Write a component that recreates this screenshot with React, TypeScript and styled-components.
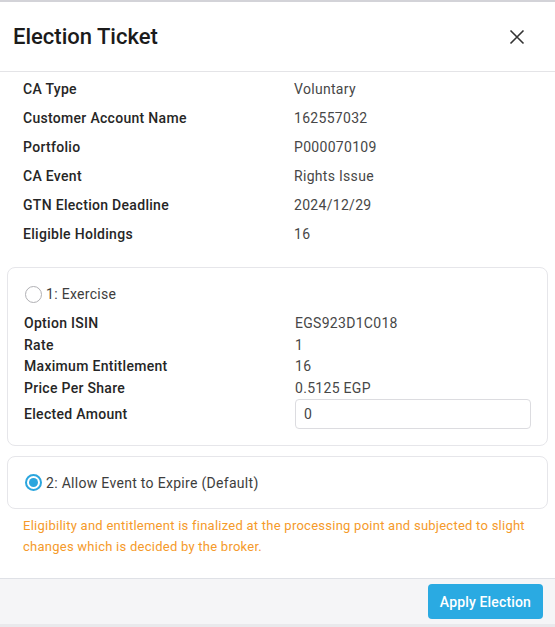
import { styled, createGlobalStyle } from "styled-components";

const GlobalStyle = createGlobalStyle`
  * { box-sizing: border-box; }
  html, body { margin: 0; padding: 0; }
  body {
    background: #e9e9ec;
    font-family: Roboto, "Noto Sans", Arial, sans-serif;
    -webkit-font-smoothing: antialiased;
  }
`;

const Modal = styled.div`
  width: 555px;
  height: 624px;
  background: #ffffff;
  border-top: 2px solid #d3d3d8;
  display: flex;
  flex-direction: column;
`;

const Header = styled.header`
  height: 70px;
  padding: 0 13px;
  display: flex;
  align-items: center;
  justify-content: space-between;
  border-bottom: 1px solid #e4e4e7;
`;

const Title = styled.h1`
  margin: 0;
  font-size: 22px;
  font-weight: 500;
  color: #1b1b1b;
`;

const CloseButton = styled.button`
  width: 24px;
  height: 24px;
  padding: 0;
  margin-right: 13px;
  border: none;
  background: transparent;
  color: #333;
  display: flex;
  align-items: center;
  justify-content: center;
  cursor: pointer;
`;

const Body = styled.div`
  flex: 1;
  display: flex;
  flex-direction: column;
`;

const InfoList = styled.div`
  padding: 2px 0 0 23px;
`;

const Row = styled.div<{ $height: number }>`
  display: grid;
  grid-template-columns: 271px 1fr;
  align-items: center;
  height: ${(p) => p.$height}px;
  font-size: 14px;
  letter-spacing: 0.3px;
`;

const Label = styled.span`
  font-weight: 500;
  color: #262626;
`;

const Value = styled.span`
  color: #474747;
`;

const Card = styled.section<{ $top: number }>`
  margin: ${(p) => p.$top}px 7px 0;
  padding: 16px 18px 15px 16px;
  border: 1px solid #e6e6ea;
  border-radius: 8px;
`;

const OptionRow = styled.label`
  display: flex;
  align-items: center;
  gap: 4px;
  height: 20px;
  font-size: 14px;
  letter-spacing: 0.3px;
  color: #3d3d3d;
  cursor: pointer;
`;

const Radio = styled.span<{ $checked?: boolean }>`
  width: 17px;
  height: 17px;
  margin-left: 1px;
  border-radius: 50%;
  border: ${(p) => (p.$checked ? "2px solid #2ba6de" : "1.5px solid #b0b0b4")};
  display: flex;
  align-items: center;
  justify-content: center;
  &::after {
    content: "";
    width: 9px;
    height: 9px;
    border-radius: 50%;
    background: ${(p) => (p.$checked ? "#2ba6de" : "transparent")};
  }
`;

const Details = styled.div`
  margin-top: 8px;
`;

const Input = styled.input`
  width: 236px;
  height: 30px;
  padding: 0 8px;
  border: 1px solid #dcdce0;
  border-radius: 4px;
  font-family: inherit;
  font-size: 14px;
  color: #454545;
  outline: none;
`;

const Notice = styled.p`
  margin: 6px 0 0;
  padding: 0 23px;
  font-size: 13px;
  line-height: 21px;
  letter-spacing: 0.25px;
  color: #f59a2a;
`;

const Footer = styled.footer`
  height: 46px;
  padding: 0 12px;
  border-top: 1px solid #dfe1e6;
  background: #f5f5f7;
  display: flex;
  align-items: center;
  justify-content: flex-end;
`;

const PrimaryButton = styled.button`
  height: 35px;
  padding: 0 12px;
  border: none;
  border-radius: 4px;
  background: #2aaae2;
  color: #ffffff;
  font-family: inherit;
  font-size: 14px;
  font-weight: 500;
  letter-spacing: 0.15px;
  cursor: pointer;
`;

const info: [string, string][] = [
  ["CA Type", "Voluntary"],
  ["Customer Account Name", "162557032"],
  ["Portfolio", "P000070109"],
  ["CA Event", "Rights Issue"],
  ["GTN Election Deadline", "2024/12/29"],
  ["Eligible Holdings", "16"],
];

const exercise: [string, string][] = [
  ["Option ISIN", "EGS923D1C018"],
  ["Rate", "1"],
  ["Maximum Entitlement", "16"],
  ["Price Per Share", "0.5125 EGP"],
];

export default function App() {
  return (
    <>
      <GlobalStyle />
      <Modal>
        <Header>
          <Title>Election Ticket</Title>
          <CloseButton aria-label="Close">
            <svg width="24" height="24" viewBox="0 0 24 24" fill="none">
              <path d="M18.5 5.5L5.5 18.5M5.5 5.5l13 13" stroke="currentColor" strokeWidth="1.6" />
            </svg>
          </CloseButton>
        </Header>

        <Body>
          <InfoList>
            {info.map(([label, value]) => (
              <Row key={label} $height={29}>
                <Label>{label}</Label>
                <Value>{value}</Value>
              </Row>
            ))}
          </InfoList>

          <Card $top={19}>
            <OptionRow>
              <Radio />
              1: Exercise
            </OptionRow>
            <Details>
              {exercise.map(([label, value]) => (
                <Row key={label} $height={21.7}>
                  <Label>{label}</Label>
                  <Value>{value}</Value>
                </Row>
              ))}
              <Row $height={31}>
                <Label>Elected Amount</Label>
                <Input defaultValue="0" />
              </Row>
            </Details>
          </Card>

          <Card $top={10}>
            <OptionRow>
              <Radio $checked />
              2: Allow Event to Expire (Default)
            </OptionRow>
          </Card>

          <Notice>
            Eligibility and entitlement is finalized at the processing point and subjected to slight
            changes which is decided by the broker.
          </Notice>
        </Body>

        <Footer>
          <PrimaryButton>Apply Election</PrimaryButton>
        </Footer>
      </Modal>
    </>
  );
}
